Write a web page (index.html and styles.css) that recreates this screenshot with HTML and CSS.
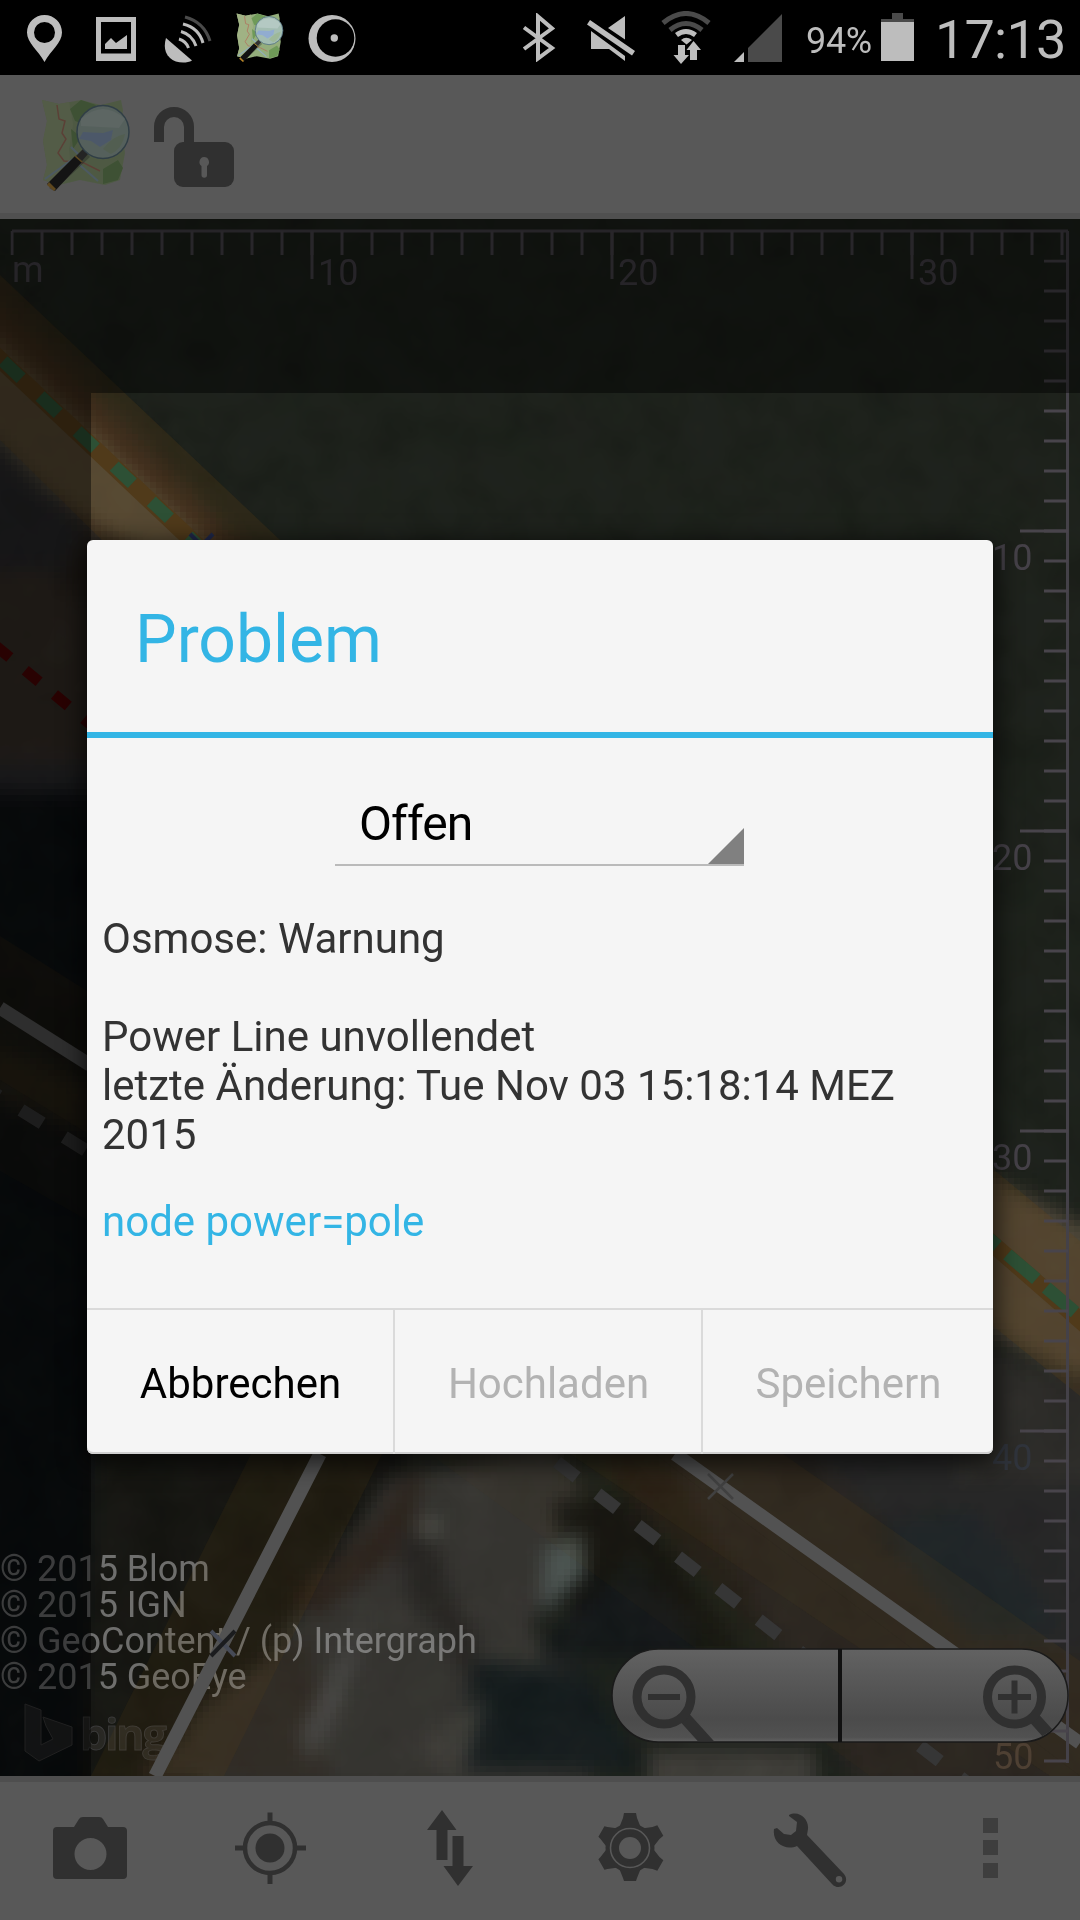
FILE: index.html
```html
<!DOCTYPE html>
<html lang="de">
<head>
<meta charset="utf-8">
<title>Problem</title>
<link rel="stylesheet" href="styles.css">
</head>
<body>
<svg class="defs" width="0" height="0">
  <symbol id="maplogo" viewBox="0 0 90 92">
    <path d="M1 1l17 4 22-4 20 5 20-5 2 10-2 15 4 28-5 27-15 5-25-5-21 5L2 81l4-15-4-24 4-20z" fill="#94ae7c"/>
    <path d="M1 1l17 4 10-2 4 22-4 25 2 26-10 10L2 81l4-15-4-24 4-20z" fill="#a0b284"/>
    <path d="M40 1l15 5-9 20-12-4-5-12zM62 70l15-9 5 8-5 12-15 4zM30 30l10 8-8 12z" fill="#6f9a58"/>
    <path d="M16 6l2 14 6 2-3 12 4 6-8 14 6 8 20 2 16 8" fill="none" stroke="#b0745e" stroke-width="1.5"/>
    <path d="M4 80l28-20 25 22M30 48l12 12" fill="none" stroke="#8faec0" stroke-width="2"/>
    <path d="M45 53L8 89l5 3 36-34z" fill="#222" opacity=".35"/>
    <path d="M42 50l5 5-6 7-6-5z" fill="#333"/>
    <path d="M34 57l7 6-27 29-8-7z" fill="#111"/>
    <path d="M8 83l7 7-2 2-7-6z" fill="#b98526"/>
    <path d="M34 57l7 6" stroke="#b98526" stroke-width="1.5"/>
    <ellipse cx="62" cy="33" rx="26" ry="26.500" fill="#a3bdb2" stroke="#506f80" stroke-width="1.500"/>
    <path d="M42 33l20 1 10-3-2 10-11 7-9-6-12-2z" fill="#91acd0"/>
    <path d="M40 20q22-20 44 0l-6 9-38-2z" fill="#bfd0cf" opacity=".6"/>
    <path d="M62 50q10-13 22-15-3 15-14 20z" fill="#9bb78f" opacity=".7"/>
  </symbol>
</svg>

<div class="screen">
  <header class="statusbar">
    <svg class="pin" viewBox="27 15 35 47"><path fill-rule="evenodd" d="M44.500 15C35 15 27 22.500 27 32.500 27 43 38 50 44.500 62 51 50 62 43 62 32.500 62 22.500 54 15 44.500 15zm0 7a10.500 10.500 0 1 1 0 21 10.500 10.500 0 0 1 0-21z"/></svg>
    <svg class="pic" viewBox="96 17 40 44"><path fill-rule="evenodd" d="M96 17h40v44H96zM101 22v31.500h30V22zM105 49v-5l6-6 5 5 11-8v14z"/></svg>
    <svg class="dish" viewBox="164 15 48 48"><path d="M166 38l26 22.500C186 64 175 63 170 58c-6-6-6-13-4-20z"/><g fill="none" stroke="#bdbdbd" stroke-width="3"><path d="M179 39q7 2 9.500 9M181 31.500q11 3 15 14.500M183 24q16 4 20 19"/><path stroke="#4a4a4a" d="M185 17q19 5 25 24"/></g></svg>
    <svg class="logo-s"><use href="#maplogo"/></svg>
    <svg class="ring" viewBox="308 15 48 47"><circle cx="332" cy="38.500" r="23.500"/><circle cx="335.500" cy="38" r="18.800" fill="#000"/><circle cx="334.300" cy="38" r="3.700"/></svg>
    <span class="spacer"></span>
    <svg class="bt" viewBox="523 13 34 49"><path d="M525 27.500l28 20.500-14 10.500v-42l14 12L525 49" fill="none" stroke="#bdbdbd" stroke-width="4"/></svg>
    <svg class="mute" viewBox="587 15 48 47"><path d="M608 28l17-12v23.500zM591 31l34 25v5l-16-12h-18zM590 20l45 31-3 4.500-45-31z"/></svg>
    <svg class="wifi" viewBox="660 11 52 54"><g fill="none" stroke="#4a4a4a" stroke-width="5"><path d="M663 23q23-19 46 0M670 30q16-13 32 0"/><path d="M676.500 35q9.500-7 19 0" stroke="#bdbdbd"/></g><path d="M681 40q5-4.500 11 0l-5.500 4.500zM678 45h7v10h4l-8 9-7.500-9h4.500zM690 60V50h-3.500l7-9 7.500 9h-4v10z"/></svg>
    <svg class="signal" viewBox="734 14 48 48"><path fill="#4a4a4a" d="M748 62V48l34-34v48z"/><path d="M734 62l10-10v10z"/></svg>
    <span class="pct">94%</span>
    <svg class="batt" viewBox="881 13 33 48"><path fill="#4a4a4a" d="M881 22v-3h11v-6h11v6h11v3z"/><path d="M881 22h33v39h-33z"/></svg>
    <span class="clock">17:13</span>
  </header>

  <nav class="topbar">
    <svg class="logo"><use href="#maplogo"/></svg>
    <svg class="lock" viewBox="154 107 80 80"><path d="M159 142v-15a15 15 0 0 1 30 0v18" fill="none" stroke="#303030" stroke-width="10"/><rect x="174" y="142" width="60" height="45" rx="9"/><path fill="#585858" d="M204 157a5 5 0 0 1 3 9v9a2.500 2.500 0 0 1-5.500 0v-9a5 5 0 0 1 2.500-9z"/></svg>
  </nav>

  <main class="map">
    <svg viewBox="0 219 1080 1557" width="1080" height="1557">
      <defs>
        <filter id="soft" filterUnits="userSpaceOnUse" x="-60" y="160" width="1200" height="1700" color-interpolation-filters="sRGB">
          <feGaussianBlur stdDeviation="9"/>
        </filter>
        <filter id="pixels" filterUnits="userSpaceOnUse" x="0" y="219" width="1080" height="1560" color-interpolation-filters="sRGB">
          <feFlood x="2" y="221" width="1" height="1"/>
          <feComposite x="0" y="219" width="6" height="6"/>
          <feTile result="grid"/>
          <feComposite in="SourceGraphic" in2="grid" operator="in"/>
          <feMorphology operator="dilate" radius="3"/>
        </filter>
        <filter id="noise" filterUnits="userSpaceOnUse" x="0" y="219" width="1080" height="1557" color-interpolation-filters="sRGB">
          <feTurbulence type="fractalNoise" baseFrequency=".022" numOctaves="3" seed="8"/>
          <feColorMatrix values="0.6 0.4 0 0 -0.3  0.4 0.6 0 0 -0.3  0.5 0.4 0.1 0 -0.3  0 0 0 0 1"/>
        </filter>
        <pattern id="ticksX" patternUnits="userSpaceOnUse" x="10.500" y="231" width="30" height="24"><rect width="3" height="24" fill="#48444b"/></pattern>
        <pattern id="ticksY" patternUnits="userSpaceOnUse" x="1044" y="259.500" width="24" height="30"><rect width="24" height="3" fill="#48444b"/></pattern>
      </defs>

      <!-- aerial imagery -->
      <g filter="url(#pixels)">
        <rect y="219" width="1080" height="1557" fill="#1a1e18"/>
        <g filter="url(#soft)">
          <path d="M-60 200L0 290 200 500V800H-60z" fill="#28221b"/>
          <path d="M-60 280L0 318 215 520 240 620-60 420z" fill="#4f4839"/>
          <path d="M-60 400L0 445 85 530 60 580-60 580z" fill="#252526"/>
          <path d="M-40 290L240 560" stroke="#33231a" stroke-width="18"/>
          <path d="M-60 570h110l80 80v130H-60z" fill="#322b24"/>
          <path d="M-60 762h160v30H-60z" fill="#28282b"/>
          <path d="M-60 792h320v1000H-60z" fill="#0a0e10"/>
          <path d="M-60 1020l160 70v50l-160-60z" fill="#1c1a15"/>
          <path d="M95 1440h320l-190 350H80z" fill="#13130f"/>
          <path d="M390 1480l170-40 20 60-30 70-20 60 60 60v100H200l30-80 70-100z" fill="#33322e"/>
          <path d="M210 1700l100-70 20 150H140z" fill="#2f2a23"/>
          <path d="M290 1600l75-65 60-80-15 90-90 70z" fill="#2a211a"/>
          <path d="M300 1735l70-130-20 70-40 90z" fill="#474644"/>
          <path d="M395 1535l35-5 20 60 30 50-10 50-30-60-30-25z" fill="#252320"/>
          <path d="M415 1530l25-15-5 25z" fill="#5a5954"/>
          <path d="M475 1660l110 10 60 100H450z" fill="#131a1b"/>
          <path d="M552 1500h80l110 150H580z" fill="#11120f"/>
          <path d="M545 1550l35-18 5 40-45 42z" fill="#4b5350"/>
          <path d="M545 1640l90-80 60 70v30H540z" fill="#121617"/>
          <path d="M590 1455h90l230 190H780z" fill="#211b15"/>
          <path d="M660 1440h190l250 200v150H860z" fill="#26231f"/>
          <path d="M800 1440h300v210h-80z" fill="#242424"/>
          <path d="M875 1530l100-20 90 120-90 10z" fill="#1d2325"/>
          <path d="M650 1750h165v50H650zM420 1744l65-50-25 90z" fill="#3c3b36"/>
          <path d="M960 1160l150 80v150l-150-70z" fill="#4b4336"/>
          <path d="M960 1340l150 50v90H960z" fill="#2a2926"/>
        </g>
      </g>
      <rect class="grain" y="219" width="1080" height="1557" filter="url(#noise)"/>

      <!-- attribution -->
      <g class="credit">
        <text x="0" y="1581">© 2015 Blom</text>
        <text x="0" y="1617">© 2015 IGN</text>
        <text x="0" y="1653">© GeoContent / (p) Intergraph</text>
        <text x="0" y="1689">© 2015 GeoEye</text>
      </g>
      <g class="bing">
        <path d="M25 1704l16 6v35l12-6-7-13-3-9 29 10v18l-33 16-14-10z"/>
        <text x="80" y="1750">bing</text>
      </g>

      <!-- ways -->
      <g fill="#6a4610" fill-opacity=".22">
        <path d="M0 275L281 541H103L0 440zM993 1169l87 72v155l-87-70z"/>
        <g fill-opacity=".12">
          <path d="M0 936l87 55v142L0 1080zM251 1454h131L224 1776H91z"/>
          <path d="M655 1454h128l297 207v115z"/>
          <path d="M570 1454h85l425 322h-30z"/>
        </g>
        <path fill-opacity=".06" d="M0 1080l87 53v87L0 1171zM430 1454h140l480 322H870z"/>
      </g>
      <g fill="none">
        <path d="M-10 350L200 548M980 1233l110 96" stroke="#503a1a" stroke-width="17"/>
        <path d="M3 361L205 552" stroke="#2d5035" stroke-width="13" stroke-dasharray="25 26"/>
        <path d="M980 1231l110 94" stroke="#2d5035" stroke-width="13" stroke-dasharray="38 13" stroke-dashoffset="15"/>
        <path d="M-4 646L90 724" stroke="#4a0505" stroke-width="11" stroke-dasharray="18 20"/>
        <path d="M0 1008l90 57M320 1454L155 1776M675 1454l405 289" stroke="#525252" stroke-width="13.500"/>
        <path d="M-24 1082L90 1153" stroke="#353535" stroke-width="13" stroke-dasharray="25 26" stroke-dashoffset="-2"/>
        <path d="M557 1462l440 344" stroke="#363636" stroke-width="13" stroke-dasharray="25 26.200"/>
        <path d="M211 1631l24 25" stroke="#464a56" stroke-width="4"/>
        <path d="M235 1631l-24 25" stroke="#1b1c1e" stroke-width="4"/>
        <path d="M708 1474l25 25M733 1474l-25 25" stroke="#414141" stroke-width="2.500"/>
        <path d="M190 534l8 8M213 534l-8 8" stroke="#20284a" stroke-width="4"/>
      </g>

      <!-- scale -->
      <path d="M12 231H1068M1067.500 231V1763" fill="none" stroke="#444148" stroke-width="3"/>
      <rect x="10.500" y="231" width="1056" height="24" fill="url(#ticksX)"/>
      <rect x="1044" y="259.500" width="24" height="1504" fill="url(#ticksY)"/>
      <path d="M312 231v48M612 231v48M912 231v48M1020 531h48M1020 831h48M1020 1131h48M1020 1431h48" stroke="#48444b" stroke-width="3"/>
      <g class="scale">
        <text x="12" y="282">m</text><text x="318" y="285">10</text><text x="618" y="285">20</text><text x="918" y="285">30</text>
        <text x="992" y="570">10</text><text x="992" y="870">20</text><text x="992" y="1170">30</text><text class="blue" x="992" y="1470">40</text><text class="tan" x="993" y="1769">50</text>
      </g>

      <!-- area outside the download box -->
      <path d="M0 219H1080V393H91V1776H0z" fill="#000" opacity=".44"/>
    </svg>

    <svg class="zoom" viewBox="610 1646 460 100">
      <defs>
        <linearGradient id="btn" x2="0" y2="1"><stop stop-color="#626262"/><stop offset=".75" stop-color="#4b4b4b"/><stop offset=".95" stop-color="#515151"/><stop offset="1" stop-color="#626262"/></linearGradient>
        <clipPath id="pill"><rect x="612.500" y="1649" width="455" height="92" rx="46"/></clipPath>
      </defs>
      <rect x="612" y="1649" width="456" height="93" rx="46.500" fill="url(#btn)" stroke="#1a1a1a" stroke-width="1.500"/>
      <path d="M840 1649v93" stroke="#111" stroke-width="4"/>
      <g clip-path="url(#pill)" fill="none" stroke="#303030">
        <path d="M685 1718l28 31M1034 1718l28 31" stroke-width="12"/>
        <circle cx="664" cy="1697" r="27" stroke-width="9"/><circle cx="1014.500" cy="1697" r="27" stroke-width="9"/>
        <path d="M648 1697h32M998 1697h33M1014.500 1680.500v33" stroke-width="6"/>
      </g>
    </svg>
  </main>

  <nav class="toolbar">
    <svg viewBox="50 1808 80 80"><path fill-rule="evenodd" d="M57 1827h17l5-8q1-2 4-2h16q3 0 4 2l5 8h15q4 0 4 4v44q0 4-4 4H57q-4 0-4-4v-44q0-4 4-4zm33.500 11a16 16 0 1 0 0 32 16 16 0 0 0 0-32z"/></svg>
    <svg viewBox="230 1808 80 80"><circle cx="270" cy="1848" r="14.500"/><circle cx="270" cy="1848" r="25" fill="none" stroke="#303030" stroke-width="4.500"/><path d="M270 1812.500v10M270 1873v11M235 1848h10M295 1848h11" stroke="#303030" stroke-width="5"/></svg>
    <svg viewBox="410 1808 80 80"><path d="M442 1810l14.500 20H447.500v30h-11v-30H427zM452.500 1836h11v30h9.500l-15 20-14.500-20h9z"/></svg>
    <svg viewBox="590 1808 80 80"><circle cx="630" cy="1848" r="24.500"/><path id="tooth" d="M619 1828l4-10 1-5h12l1 5 4 10v40l-4 10-1 3h-12l-1-3-4-10z"/><use href="#tooth" transform="rotate(60 630 1848)"/><use href="#tooth" transform="rotate(120 630 1848)"/><circle cx="630" cy="1848" r="19.500" fill="none" stroke="#585858" stroke-width="1.600"/><circle cx="630" cy="1848" r="11" fill="#585858"/></svg>
    <svg viewBox="770 1808 80 80"><path fill-rule="evenodd" d="M789 1815c10-5 20 4 19 14l-1 6 37 39c7 9-5 18-12 10l-35-38c-12 5-25-3-23-17l3-1 7 6 7 1 5-4 1-9-8-6zM839 1876a3.200 3.200 0 1 0 .1 6.500 3.200 3.200 0 0 0-.1-6.500z"/></svg>
    <svg class="more" viewBox="950 1808 80 80"><path d="M983 1818h15v15h-15zM983 1840h15v15h-15zM983 1863h15v15h-15z"/></svg>
  </nav>
</div>

<section class="dialog">
  <h1>Problem</h1>
  <div class="body">
    <div class="spinner">Offen<svg viewBox="0 0 36 36"><path d="M36 0v36H0z"/></svg></div>
    <p>Osmose: Warnung<br><br>Power Line unvollendet<br>letzte Änderung: Tue Nov 03 15:18:14 MEZ 2015</p>
    <a>node power=pole</a>
  </div>
  <footer>
    <button class="on">Abbrechen</button><button>Hochladen</button><button>Speichern</button>
  </footer>
</section>
</body>
</html>
```

FILE: styles.css
```css
* { box-sizing: border-box; }
html, body { margin: 0; }
body {
  position: relative;
  width: 1080px;
  height: 1920px;
  overflow: hidden;
  background: #000;
  font-family: Roboto, "Noto Sans", sans-serif;
}
svg { display: block; flex: none; }
.defs { position: absolute; }

.screen { display: flex; flex-direction: column; height: 1920px; }

.statusbar {
  display: flex;
  align-items: flex-start;
  height: 75px;
  padding: 0 16px 0 27px;
  color: #bdbdbd;
  fill: #bdbdbd;
}
.pin { width: 35px; height: 47px; margin: 15px 34px 0 0; }
.pic { width: 40px; height: 44px; margin: 17px 28px 0 0; }
.dish { width: 48px; height: 48px; margin: 15px 24px 0 0; }
.logo-s { width: 48px; height: 49px; margin: 13px 24px 0 0; }
.ring { width: 48px; height: 47px; margin-top: 15px; }
.spacer { flex: 1; }
.bt { width: 34px; height: 49px; margin: 13px 31px 0 0; }
.mute { width: 48px; height: 47px; margin: 15px 25px 0 0; }
.wifi { width: 52px; height: 54px; margin: 11px 22px 0 0; }
.signal { width: 48px; height: 48px; margin: 14px 24px 0 0; }
.pct { width: 75px; font-size: 36px; line-height: 42px; margin-top: 20px; letter-spacing: -.3px; white-space: nowrap; }
.batt { width: 33px; height: 48px; margin: 13px 21px 0 0; }
.clock { width: 129px; font-size: 54px; line-height: 62px; margin-top: 9px; letter-spacing: -.8px; white-space: nowrap; }

.topbar {
  display: flex;
  height: 144px;
  padding: 24px 41px;
  gap: 23px;
  background: #585858;
  border-bottom: 6px solid #505050;
}
.logo { width: 90px; height: 92px; opacity: .85; filter: brightness(.52); }
.lock { width: 80px; height: 80px; margin-top: 8px; fill: #303030; }

.map { position: relative; height: 1557px; }
.grain { opacity: .05; mix-blend-mode: screen; }
.credit { font-size: 36px; fill: #aaa; fill-opacity: .6; letter-spacing: -.05px; }
.bing { fill: #333; stroke: #3a3a3a; stroke-width: 1; fill-opacity: .5; }
.bing text { font: 700 43px "Open Sans", sans-serif; letter-spacing: -2px; fill: #3c3a36; }
.scale { font-size: 36px; fill: #454148; }
.scale .blue { fill: #30343c; }
.scale .tan { fill: #4e4033; }
.zoom { position: absolute; left: 610px; top: 1427px; width: 460px; height: 100px; }

.toolbar {
  display: grid;
  grid-template-columns: repeat(6, 1fr);
  justify-items: center;
  height: 144px;
  padding-top: 26px;
  background: #585858;
  border-top: 6px solid #4e4e4e;
  fill: #303030;
}
.toolbar svg { width: 80px; height: 80px; }
.toolbar .more { fill: #3e3e3e; }

.dialog {
  position: absolute;
  left: 87px;
  top: 540px;
  width: 906px;
  height: 914px;
  display: flex;
  flex-direction: column;
  border-radius: 6px;
  background: #f5f5f5;
  box-shadow: 0 6px 24px 4px rgba(0, 0, 0, .65), inset 0 -2px 0 #d0d0d0;
  font-size: 42px;
  line-height: 49px;
  color: #333;
}
.dialog h1 {
  height: 198px;
  margin: 0;
  padding: 0 48px;
  border-bottom: 6px solid #33b5e5;
  font-weight: 400;
  font-size: 66px;
  line-height: 200px;
  color: #33b5e5;
}
.body { flex: 1; padding: 48px 15px 0; }
.spinner {
  display: flex;
  justify-content: space-between;
  align-items: flex-end;
  width: 409px;
  height: 80px;
  margin: 0 0 48px 233px;
  padding-left: 24px;
  border-bottom: 2px solid #bababa;
  font-size: 48px;
  line-height: 80px;
  letter-spacing: -.9px;
  color: #000;
}
.spinner svg { width: 36px; height: 36px; fill: #808080; }
.body p { margin: 0 0 38px; }
.body a { display: block; color: #33b5e5; }
.dialog footer { display: grid; grid-template-columns: 308px 308px 1fr; height: 146px; border-top: 2px solid #dadada; }
.dialog button {
  border: 0;
  border-right: 2px solid #dadada;
  padding: 3px 0 0 1px;
  background: none;
  font: 42px/49px Roboto, sans-serif;
  color: #b3b3b3;
}
.dialog button:last-child { border-right: 0; }
.dialog .on { color: #000; }
```
